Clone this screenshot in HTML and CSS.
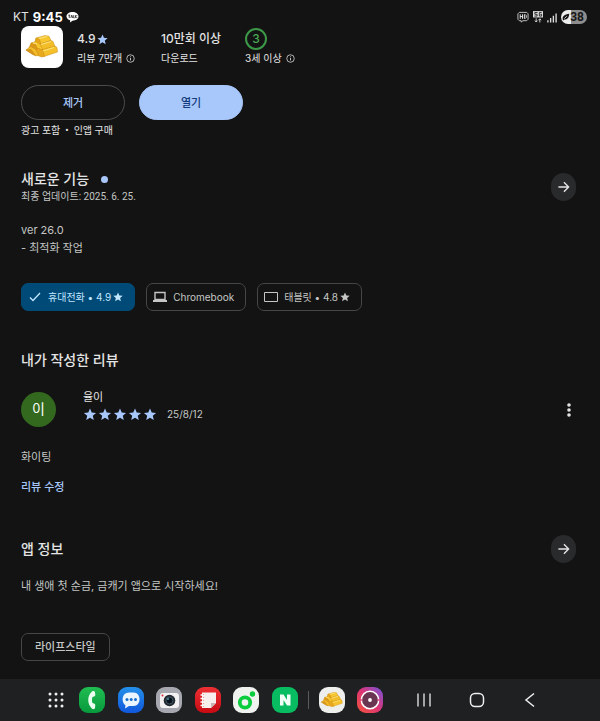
FILE: index.html
```html
<!DOCTYPE html>
<html lang="ko">
<head>
<meta charset="utf-8">
<meta name="viewport" content="width=device-width, initial-scale=1">
<title>앱 정보</title>
<link rel="stylesheet" href="styles.css">
</head>
<body>
<svg class="defs" aria-hidden="true">
  <defs>
    <linearGradient id="green" x1="0" y1="0" x2="0" y2="1"><stop offset="0" stop-color="#20bd51"/><stop offset="1" stop-color="#079a3d"/></linearGradient>
    <linearGradient id="blue" x1="0" y1="0" x2="0" y2="1"><stop offset="0" stop-color="#2490e9"/><stop offset="1" stop-color="#1157dc"/></linearGradient>
    <linearGradient id="red" x1="0" y1="0" x2="0" y2="1"><stop offset="0" stop-color="#ed3033"/><stop offset="1" stop-color="#c80a13"/></linearGradient>
    <linearGradient id="sunset" x1="0" y1="1" x2="1" y2="0"><stop offset="0" stop-color="#f4553b"/><stop offset=".5" stop-color="#dd3473"/><stop offset="1" stop-color="#7155e0"/></linearGradient>
    <symbol id="star" viewBox="0 0 24 24"><path fill="currentColor" d="M12 1l3.200 7.400 8 .7-6.100 5.300 1.900 7.900-7-4.200-7 4.200 1.900-7.900L.8 9.100l8-.7z"/></symbol>
    <symbol id="info" viewBox="0 0 12 12"><circle cx="6" cy="6" r="5" fill="none" stroke="currentColor"/><path d="M6 5.400v3.200M6 3.200v1.100" stroke="currentColor" stroke-width="1.100"/></symbol>
    <symbol id="arrow" viewBox="0 0 14 14"><path d="M1.500 7h11M7.500 2l5 5-5 5" fill="none" stroke="currentColor" stroke-width="1.500"/></symbol>
    <symbol id="bars" viewBox="0 0 42 42">
      <g stroke-linejoin="round" stroke-width=".5" stroke="#c98a10">
        <path fill="#f7c52e" d="M15 12l9-2.500 4 .8 2 4.200-11 3.500-5-1z"/>
        <path fill="#e9a81b" d="M15 12l3.500 1.500L20 18l-6-1z"/>
        <path fill="#f3bd28" d="M18 18.500l12-4 2 1 2 5-13 4z"/>
        <path fill="#f7c52e" d="M10 17l5-1.500 4 2.500 3 6-6 1z"/>
        <path fill="#dc9818" d="M10 17l4.500 1 2.500 6-4 1-5-3z"/>
        <path fill="#f5c02a" d="M20 24l14-4 2 1.500.5 4.500L23 30.500z"/>
        <path fill="#e8a91e" d="M13 24l5-1.500 4 2 1.500 6-3 .5-5-2z"/>
        <path fill="#f2bb2a" d="M5 24l4.500-3.500 5 2.500 3 6-2.500 1z"/>
        <path fill="#d8931a" d="M5 24l5-.5 4.500 6-3-1z"/>
      </g>
      <path d="M18 12.500l8-2M20 18.500l10-3M22 25l11-3.500M12 17l4 1" stroke="#ffe27a" fill="none" stroke-width="1.200"/>
    </symbol>
  </defs>
</svg>

<header class="status">
  <span class="carrier">KT</span>
  <time class="clock">9:45</time>
  <svg class="talk" viewBox="0 0 14 12" role="img" aria-label="메시지 알림"><path fill="#fff" d="M7 .5c3.700 0 6.500 2 6.500 4.700S10.700 10 7 10l-2.700 1.800.2-2.200C2 8.900.5 7.300.5 5.200.5 2.500 3.300.5 7 .5z"/><path d="M2.500 4h2M3.500 4v3M5.200 7l1-3 1 3M8.300 4v3h1M10.300 4v3M12 4l-1.500 1.500L12 7" fill="none" stroke="#222" stroke-width=".9"/></svg>
  <span class="signals">
    <svg class="hd" viewBox="0 0 13 12" role="img" aria-label="HD"><path d="M2.500 1h8l1.500 1.500v6L10.500 10h-4l-2 1.500V10h-2L1 8.500v-6z" fill="none" stroke="#ccc"/><path d="M3.500 3v5M6 3v5M3.500 5.500H6M8 3.500v4h1l1-1v-2l-1-1z" fill="none" stroke="#eee"/></svg>
    <svg class="five" viewBox="0 0 11 13" role="img" aria-label="5G"><path d="M0 0h11v7H0z" fill="#ddd"/><path d="M5 1.500H2v2h2.500v2H1.500M9.500 1.500H7v4h2.500v-2H8" fill="none" stroke="#222"/><path d="M3.500 8v4M2 10.500l1.500 1.500L5 10.500M7.500 12.500v-4M6 10l1.500-1.500L9 10" fill="none" stroke="#ddd"/></svg>
    <svg class="cell" viewBox="0 0 11 11" role="img" aria-label="신호 강도"><path d="M1 8.500V11M4 6v5M7 3.500V11M10 1v10" stroke="#ddd" stroke-width="1.500"/></svg>
    <span class="battery"><svg viewBox="0 0 10 10" aria-hidden="true"><path d="M1 8c-1-4 2-6 8-7 0 5-3 8-6 7L1.500 9.500z" fill="#171717"/><path d="M3 7l3-3" stroke="#eee"/></svg>38</span>
  </span>
</header>

<main class="page">
  <section class="summary">
    <svg class="app-icon" viewBox="0 0 42 42" role="img" aria-label="앱 아이콘"><use href="#bars"/></svg>
    <div class="metric">
      <p class="value">4.9<svg class="value-star" aria-hidden="true"><use href="#star"/></svg></p>
      <p class="label">리뷰 7만개 <svg class="info" aria-hidden="true"><use href="#info"/></svg></p>
    </div>
    <div class="metric">
      <p class="value">10만회 이상</p>
      <p class="label">다운로드</p>
    </div>
    <div class="metric">
      <p class="value"><span class="age">3</span></p>
      <p class="label">3세 이상 <svg class="info" aria-hidden="true"><use href="#info"/></svg></p>
    </div>
  </section>

  <div class="actions">
    <button class="action" type="button">제거</button>
    <button class="action primary" type="button">열기</button>
  </div>
  <p class="notice"><span>광고 포함</span><span>•</span><span>인앱 구매</span></p>

  <section class="news">
    <div class="section-head">
      <div>
        <h2 class="title">새로운 기능<span class="dot"></span></h2>
        <p class="updated">최종 업데이트: 2025. 6. 25.</p>
      </div>
      <button class="more" type="button" aria-label="새로운 기능 더보기"><svg><use href="#arrow"/></svg></button>
    </div>
    <p class="text changes">ver 26.0<br>- 최적화 작업</p>
  </section>

  <div class="chips">
    <button class="chip selected" type="button"><svg class="chip-icon" viewBox="0 0 14 12"><path d="M2 6.500L5 9.500 12 2" fill="none" stroke="currentColor" stroke-width="1.300"/></svg><span>휴대전화 • 4.9</span><svg class="chip-star"><use href="#star"/></svg></button>
    <button class="chip" type="button"><svg class="chip-icon" viewBox="0 0 14 12"><path d="M2 1.500h10v7H2z" fill="none" stroke="currentColor" stroke-width="1.400"/><path d="M0 9h14v2H0z" fill="currentColor"/></svg><span>Chromebook</span></button>
    <button class="chip" type="button"><svg class="chip-icon" viewBox="0 0 14 12"><path d="M.5 1.500h13v9H.5z" fill="none" stroke="currentColor"/></svg><span>태블릿 • 4.8</span><svg class="chip-star"><use href="#star"/></svg></button>
  </div>

  <section class="review">
    <h2 class="title">내가 작성한 리뷰</h2>
    <div class="author">
      <span class="avatar">이</span>
      <div class="who">
        <p class="name">율이</p>
        <p class="rating"><span class="stars" role="img" aria-label="별점 5점"><svg><use href="#star"/></svg><svg><use href="#star"/></svg><svg><use href="#star"/></svg><svg><use href="#star"/></svg><svg><use href="#star"/></svg></span><time>25/8/12</time></p>
      </div>
      <button class="menu" type="button" aria-label="옵션"><svg viewBox="0 0 4 14"><g fill="currentColor"><circle cx="2" cy="2" r="1.800"/><circle cx="2" cy="7" r="1.800"/><circle cx="2" cy="12" r="1.800"/></g></svg></button>
    </div>
    <p class="text">화이팅</p>
    <a class="edit" href="#edit">리뷰 수정</a>
  </section>

  <section class="about">
    <div class="section-head">
      <h2 class="title">앱 정보</h2>
      <button class="more" type="button" aria-label="앱 정보 더보기"><svg><use href="#arrow"/></svg></button>
    </div>
    <p class="text">내 생애 첫 순금, 금캐기 앱으로 시작하세요!</p>
    <button class="tag" type="button">라이프스타일</button>
  </section>
</main>

<nav class="taskbar" aria-label="작업 표시줄">
  <button type="button" aria-label="모든 앱"><svg class="grid-icon" viewBox="0 0 16 16"><g fill="#eee"><circle cx="2" cy="2" r="1.500"/><circle cx="8" cy="2" r="1.500"/><circle cx="14" cy="2" r="1.500"/><circle cx="2" cy="8" r="1.500"/><circle cx="8" cy="8" r="1.500"/><circle cx="14" cy="8" r="1.500"/><circle cx="2" cy="14" r="1.500"/><circle cx="8" cy="14" r="1.500"/><circle cx="14" cy="14" r="1.500"/></g></svg></button>
  <button type="button" aria-label="전화"><svg class="launch" viewBox="0 0 26 26"><rect width="26" height="26" rx="9" fill="url(#green)"/><path d="M13 4.500c1-.8 2.500-.6 3 .7l.3 2.500c0 1-.4 1.600-1.300 1.900l-1.500.5c-.7 2-.7 4 0 6l1.500.5c.9.3 1.300.9 1.300 1.900l-.3 2.500c-.5 1.300-2 1.500-3 .7-5-4.500-5-13 0-17.200z" fill="#e9ffef"/></svg></button>
  <button type="button" aria-label="메시지"><svg class="launch" viewBox="0 0 26 26"><rect width="26" height="26" rx="9" fill="url(#blue)"/><path d="M11 5.500h4.500c8 0 8 13.500 0 13.500H11l-4 2.500.5-3.200C3 15.500 3.500 5.500 11 5.500z" fill="#eaf5ff"/><g fill="#176dcc"><circle cx="9" cy="12.500" r="1.500"/><circle cx="13.200" cy="12.500" r="1.500"/><circle cx="17.500" cy="12.500" r="1.500"/></g></svg></button>
  <button type="button" aria-label="카메라"><svg class="launch" viewBox="0 0 26 26"><rect width="26" height="26" rx="9" fill="#a7a8af"/><rect x="4" y="6" width="19" height="15" rx="3" fill="#f3f1f1"/><circle cx="13.500" cy="13.500" r="5.800" fill="#222a31"/><circle cx="13.500" cy="13.500" r="3.500" fill="#07141d" stroke="#455562"/><circle cx="12" cy="12" r="1" fill="#4b92a4"/><circle cx="6.500" cy="8.500" r="1" fill="#e42332"/></svg></button>
  <button type="button" aria-label="노트"><svg class="launch" viewBox="0 0 26 26"><rect width="26" height="26" rx="9" fill="url(#red)"/><path d="M7 5.500h14V16l-5 5H7z" fill="#f7eeee"/><path d="M16 21v-5h5z" fill="#c8b6b6"/><path d="M5.500 8h3M5.500 11.500h3M5.500 15h3M5.500 18.500h3" stroke="#fff" stroke-width="1.300"/><path d="M8.500 7v13" stroke="#e79a9a" stroke-dasharray="1 2"/></svg></button>
  <button type="button" aria-label="음악"><svg class="launch" viewBox="0 0 26 26"><rect width="26" height="26" rx="9" fill="#f0f2f0"/><circle cx="12" cy="15.500" r="5.200" fill="none" stroke="#0bcc3d" stroke-width="3.800"/><circle cx="19.500" cy="7" r="2.700" fill="#0bcc3d"/></svg></button>
  <button type="button" aria-label="네이버"><svg class="launch" viewBox="0 0 26 26"><rect width="26" height="26" rx="9" fill="#08bc61"/><path d="M8 18.500v-11h3.500l3.500 5.400V7.500h3.500v11H15l-3.500-5.400v5.400z" fill="#f2fff7"/></svg></button>
  <span class="divider"></span>
  <button type="button" aria-label="금캐기"><svg class="launch" viewBox="0 0 26 26"><rect width="26" height="26" rx="9" fill="#eeeeec"/><use href="#bars" x="-1" y="-1" width="28" height="28"/></svg></button>
  <button type="button" aria-label="화면 기록"><svg class="launch" viewBox="0 0 26 26"><rect width="26" height="26" rx="9" fill="url(#sunset)"/><circle cx="13" cy="13" r="8.700" fill="#693551" stroke="#fff" stroke-width="1.500"/><path d="M3 13h3M20 13h3" stroke="#cf4b79" stroke-width="1.500"/><circle cx="13" cy="13" r="1.900" fill="#fff"/></svg></button>
  <span></span>
  <button type="button" aria-label="최근 앱"><svg class="key" viewBox="0 0 16 16"><path d="M2 1.500v13M8 1.500v13M14 1.500v13" stroke="#ddd" stroke-width="1.400"/></svg></button>
  <button type="button" aria-label="홈"><svg class="key" viewBox="0 0 16 16"><rect x="1.500" y="1.500" width="13" height="13" rx="4.500" fill="none" stroke="#eee" stroke-width="1.500"/></svg></button>
  <button type="button" aria-label="뒤로"><svg class="key" viewBox="0 0 16 16"><path d="M12 1.500L4 8l8 6.500" fill="none" stroke="#eee" stroke-width="1.500"/></svg></button>
</nav>
</body>
</html>
```
FILE: styles.css
```css
* { box-sizing: border-box; }
body {
  margin: 0;
  min-height: 100vh;
  display: flex;
  flex-direction: column;
  background: #131313;
  color: #e3e3e3;
  font-family: Inter, "Noto Sans CJK KR", sans-serif;
  font-size: 11px;
  line-height: 18px;
}
p, h2 { margin: 0; }
svg { display: block; flex: none; }
button { padding: 0; border: 0; background: none; color: inherit; font: inherit; }
.defs { position: absolute; width: 0; height: 0; }

.status {
  display: flex;
  align-items: center;
  height: 26px;
  padding: 8px 13px 0;
  font-size: 12px;
}
.clock { margin: 0 3px 0 4px; color: #fff; font-size: 13px; font-weight: 700; }
.talk { width: 13px; height: 12px; }
.signals { display: flex; align-items: center; gap: 4px; margin-left: auto; }
.hd { width: 12px; height: 12px; }
.five { width: 10px; height: 12px; }
.cell { width: 10px; height: 11px; }
.battery {
  display: flex;
  align-items: center;
  height: 14px;
  padding: 0 3px 0 1px;
  border-radius: 7px;
  background: linear-gradient(90deg, #eee 38%, #8d8d8d 38%);
  color: #171717;
  font-family: Roboto, sans-serif;
  font-weight: 700;
}
.battery svg { width: 8px; height: 10px; }

.page { padding: 0 24px 16px 21px; }
.summary { display: flex; align-items: center; }
.app-icon { width: 42px; height: 42px; margin-right: 14px; border-radius: 8px; background: #fff; }
.metric { width: 84px; }
.value { display: flex; align-items: center; height: 22px; font-size: 12px; font-weight: 500; white-space: nowrap; }
.value-star { width: 11px; height: 11px; margin-left: 1px; color: #a8c7fa; }
.label { display: flex; align-items: center; gap: 4px; height: 16px; font-size: 10px; white-space: nowrap; }
.info { width: 9px; height: 9px; }
.age {
  width: 22px;
  height: 22px;
  border: 2px solid #3c9848;
  border-radius: 50%;
  color: #49a852;
  line-height: 18px;
  text-align: center;
}

.actions { display: flex; gap: 14px; margin-top: 17px; }
.action {
  width: 104px;
  height: 35px;
  border: 1px solid #4b4c4e;
  border-radius: 18px;
  color: #a8c7fa;
  font-weight: 500;
}
.primary { border-color: #a8c7fa; background: #a8c7fa; color: #123b7d; }
.notice { display: flex; gap: 5px; margin-top: 2px; font-family: Roboto, "Noto Sans CJK KR", sans-serif; font-size: 10px; }

.section-head { display: flex; align-items: center; justify-content: space-between; }
.title { font-size: 14px; font-weight: 500; line-height: 20px; }
.dot { display: inline-block; width: 7px; height: 7px; margin-left: 12px; border-radius: 50%; background: #a8c7fa; vertical-align: 1px; }
.news { margin-top: 29px; }
.updated { color: #c4c7c5; font-family: Roboto, "Noto Sans CJK KR", sans-serif; font-size: 10px; line-height: 16px; }
.more {
  display: grid;
  place-items: center;
  width: 25px;
  height: 28px;
  border-radius: 13px;
  background: #292a2c;
}
.more svg { width: 13px; height: 14px; }
.text { color: #c4c7c5; }
.changes { margin-top: 16px; }

.chips { display: flex; gap: 11px; margin-top: 26px; }
.chip {
  display: flex;
  align-items: center;
  height: 28px;
  padding: 0 11px 0 6px;
  border: 1px solid #444746;
  border-radius: 7px;
  color: #c4c7c5;
  font-size: 10px;
}
.chip-icon { width: 14px; height: 12px; margin-right: 6px; }
.chip-star { width: 10px; height: 10px; margin-left: 2px; }
.selected { border-color: #004a77; background: #004a77; color: #c2e7ff; }

.review { margin-top: 39px; }
.author { display: flex; align-items: center; margin-top: 22px; }
.avatar {
  width: 35px;
  height: 35px;
  margin-right: 27px;
  border-radius: 50%;
  background: #33691e;
  color: #fff;
  font-size: 14px;
  line-height: 34px;
  text-align: center;
}
.who { margin-top: -8px; line-height: 17px; }
.rating { display: flex; align-items: center; gap: 10px; color: #c4c7c5; font-size: 10px; }
.stars { display: flex; gap: 1px; color: #a8c7fa; }
.stars svg { width: 14px; height: 13px; }
.menu { margin: 0 5px 0 auto; }
.menu svg { width: 4px; height: 14px; }
.review .text { margin-top: 21px; }
.edit { display: inline-block; margin-top: 12px; color: #a8c7fa; font-weight: 500; text-decoration: none; }

.about { margin-top: 39px; }
.about .text { margin-top: 14px; }
.tag {
  height: 28px;
  margin-top: 38px;
  padding: 0 13px;
  border: 1px solid #444746;
  border-radius: 7px;
  color: #c4c7c5;
  font-weight: 500;
}

.taskbar {
  display: grid;
  grid-template-columns: 66fr repeat(6, 77fr) 18fr repeat(2, 77fr) 15fr repeat(3, 106fr);
  align-items: center;
  height: 42px;
  margin-top: auto;
  padding: 0 44px 0 40px;
  background: #1e2022;
}
.taskbar button { display: grid; place-items: center; height: 100%; }
.launch { width: 26px; height: 26px; }
.grid-icon, .key { width: 16px; height: 16px; }
.divider { justify-self: center; width: 1px; height: 18px; background: #5a5b5d; }
```
